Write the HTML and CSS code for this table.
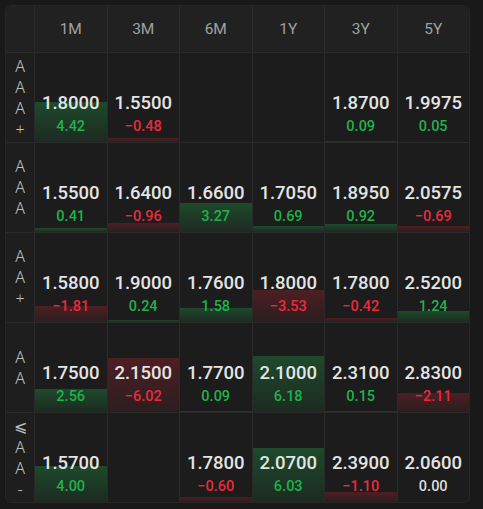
FILE: index.html
```html
<!DOCTYPE html>
<html>
<head>
<meta charset="utf-8">
<link rel="stylesheet" href="styles.css">
</head>
<body>
<div class="table">
  <div class="hcell corner"></div>
  <div class="hcell">1M</div>
  <div class="hcell">3M</div>
  <div class="hcell">6M</div>
  <div class="hcell">1Y</div>
  <div class="hcell">3Y</div>
  <div class="hcell">5Y</div>

  <div class="label"><span>A</span><span>A</span><span>A</span><span>+</span></div>
  <div class="cell"><div class="bar up" style="height:39.8px"></div><div class="val">1.8000</div><div class="chg up">4.42</div></div>
  <div class="cell"><div class="bar down" style="height:4.3px"></div><div class="val">1.5500</div><div class="chg down">−0.48</div></div>
  <div class="cell"></div>
  <div class="cell"></div>
  <div class="cell"><div class="bar up" style="height:0.8px"></div><div class="val">1.8700</div><div class="chg up">0.09</div></div>
  <div class="cell"><div class="bar up" style="height:0.45px"></div><div class="val">1.9975</div><div class="chg up">0.05</div></div>

  <div class="label"><span>A</span><span>A</span><span>A</span></div>
  <div class="cell"><div class="bar up" style="height:3.7px"></div><div class="val">1.5500</div><div class="chg up">0.41</div></div>
  <div class="cell"><div class="bar down" style="height:8.6px"></div><div class="val">1.6400</div><div class="chg down">−0.96</div></div>
  <div class="cell"><div class="bar up" style="height:29.4px"></div><div class="val">1.6600</div><div class="chg up">3.27</div></div>
  <div class="cell"><div class="bar up" style="height:6.2px"></div><div class="val">1.7050</div><div class="chg up">0.69</div></div>
  <div class="cell"><div class="bar up" style="height:8.3px"></div><div class="val">1.8950</div><div class="chg up">0.92</div></div>
  <div class="cell"><div class="bar down" style="height:6.2px"></div><div class="val">2.0575</div><div class="chg down">−0.69</div></div>

  <div class="label"><span>A</span><span>A</span><span>+</span></div>
  <div class="cell"><div class="bar down" style="height:16.3px"></div><div class="val">1.5800</div><div class="chg down">−1.81</div></div>
  <div class="cell"><div class="bar up" style="height:2.2px"></div><div class="val">1.9000</div><div class="chg up">0.24</div></div>
  <div class="cell"><div class="bar up" style="height:14.2px"></div><div class="val">1.7600</div><div class="chg up">1.58</div></div>
  <div class="cell"><div class="bar down" style="height:31.8px"></div><div class="val">1.8000</div><div class="chg down">−3.53</div></div>
  <div class="cell"><div class="bar down" style="height:3.8px"></div><div class="val">1.7800</div><div class="chg down">−0.42</div></div>
  <div class="cell"><div class="bar up" style="height:11.2px"></div><div class="val">2.5200</div><div class="chg up">1.24</div></div>

  <div class="label"><span>A</span><span>A</span></div>
  <div class="cell"><div class="bar up" style="height:23px"></div><div class="val">1.7500</div><div class="chg up">2.56</div></div>
  <div class="cell"><div class="bar down" style="height:54.2px"></div><div class="val">2.1500</div><div class="chg down">−6.02</div></div>
  <div class="cell"><div class="bar up" style="height:0.8px"></div><div class="val">1.7700</div><div class="chg up">0.09</div></div>
  <div class="cell"><div class="bar up" style="height:55.6px"></div><div class="val">2.1000</div><div class="chg up">6.18</div></div>
  <div class="cell"><div class="bar up" style="height:1.4px"></div><div class="val">2.3100</div><div class="chg up">0.15</div></div>
  <div class="cell"><div class="bar down" style="height:19px"></div><div class="val">2.8300</div><div class="chg down">−2.11</div></div>

  <div class="label"><span>⩽</span><span>A</span><span>A</span><span>-</span></div>
  <div class="cell"><div class="bar up" style="height:36px"></div><div class="val">1.5700</div><div class="chg up">4.00</div></div>
  <div class="cell"></div>
  <div class="cell"><div class="bar down" style="height:5.4px"></div><div class="val">1.7800</div><div class="chg down">−0.60</div></div>
  <div class="cell"><div class="bar up" style="height:54.3px"></div><div class="val">2.0700</div><div class="chg up">6.03</div></div>
  <div class="cell"><div class="bar down" style="height:9.9px"></div><div class="val">2.3900</div><div class="chg down">−1.10</div></div>
  <div class="cell"><div class="val">2.0600</div><div class="chg flat">0.00</div></div>
</div>
</body>
</html>
```
FILE: styles.css
```css
html, body {
  margin: 0;
  background: #191919;
}
body {
  padding: 5px;
  font-family: Roboto, "Noto Sans", "Liberation Sans", sans-serif;
}
.table {
  width: 465px;
  box-sizing: border-box;
  display: grid;
  grid-template-columns: 28px repeat(6, 1fr);
  grid-template-rows: 46px repeat(5, 90px);
  background: #1c1c1c;
  border: 1px solid #262626;
  border-radius: 6px;
  overflow: hidden;
}
.hcell {
  background: #212121;
  color: #a0a0a0;
  font-size: 15.5px;
  display: flex;
  align-items: center;
  justify-content: center;
  border-left: 1px solid #2a2a2a;
}
.hcell.corner {
  border-left: none;
}
.label {
  background: #1e1e1e;
  border-top: 1px solid #2a2a2a;
  display: flex;
  flex-direction: column;
  align-items: center;
  justify-content: center;
  color: #c0c0c0;
  font-family: "Noto Sans", "DejaVu Sans", sans-serif;
  font-size: 16px;
  font-weight: 300;
  line-height: 21px;
}
.cell {
  position: relative;
  border-left: 1px solid #2a2a2a;
  border-top: 1px solid #2a2a2a;
  display: flex;
  flex-direction: column;
  align-items: center;
  justify-content: flex-end;
  padding-bottom: 5px;
}
.bar {
  position: absolute;
  left: 0;
  right: 0;
  bottom: 0;
}
.bar.up {
  background: linear-gradient(to bottom, #1d4a2c, #1d2a21);
}
.bar.down {
  background: linear-gradient(to bottom, #4d1f23, #2b1e1f);
}
.val {
  position: relative;
  color: #e4e4e4;
  font-size: 18.5px;
  font-weight: 500;
  line-height: 24px;
  margin-bottom: 2px;
}
.chg {
  position: relative;
  font-size: 14.5px;
  font-weight: 500;
  line-height: 20px;
}
.chg.up { color: #20b14b; }
.chg.down { color: #ea2a3c; }
.chg.flat { color: #dcdcdc; }
```
